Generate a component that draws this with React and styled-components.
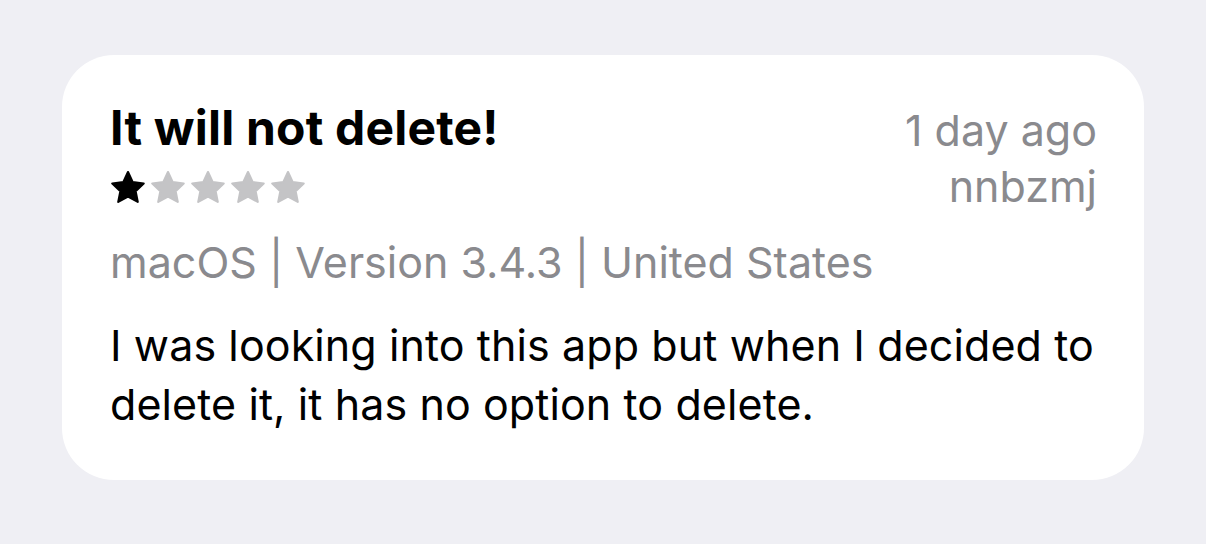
import React from 'react';
import styled, { createGlobalStyle } from 'styled-components';

const Global = createGlobalStyle`
  html, body { margin: 0; padding: 0; background: #efeff4; }
  body { font-family: Inter, "Noto Sans", sans-serif; -webkit-font-smoothing: antialiased; }
`;

const Page = styled.div`
  width: 1206px;
  height: 544px;
  box-sizing: border-box;
  padding: 55px 62px 64px 62px;
`;

const Card = styled.div`
  background: #ffffff;
  border-radius: 52px;
  height: 425px;
  box-sizing: border-box;
  padding: 44px 47px 0 48px;
`;

const Header = styled.div`
  display: flex;
  justify-content: space-between;
  align-items: flex-start;
`;

const Title = styled.h1`
  margin: 0;
  font-size: 48px;
  line-height: 58px;
  font-weight: 700;
  color: #000;
  letter-spacing: 0.2px;
`;

const Stars = styled.div`
  display: flex;
  gap: 6px;
  margin-top: 14px;
  padding-left: 1px;
`;

const Meta = styled.div`
  display: flex;
  flex-direction: column;
  align-items: flex-end;
  font-size: 43px;
  line-height: 56px;
  color: #8a8a8e;
  padding-top: 3px;
`;

const Platform = styled.div`
  font-size: 43px;
  line-height: 56px;
  color: #8a8a8e;
  margin-top: 20px;
`;

const Body = styled.p`
  margin: 26px 0 0;
  font-size: 43px;
  line-height: 59px;
  color: #000;
  letter-spacing: 0.1px;
`;

const Star = ({ filled }) => (
  <svg width="34" height="32" viewBox="1 0.5 22 21">
    <path
      d="M12 1.2l3.1 6.6 7.2.9-5.3 5 1.4 7.1L12 17.3l-6.4 3.5 1.4-7.1-5.3-5 7.2-.9z"
      fill={filled ? '#000' : '#c4c4c6'}
      stroke={filled ? '#000' : '#c4c4c6'}
      strokeWidth="1.4"
      strokeLinejoin="round"
    />
  </svg>
);

export default function App() {
  return (
    <>
      <Global />
      <Page>
        <Card>
          <Header>
            <div>
              <Title>It will not delete!</Title>
              <Stars>
                {[1, 2, 3, 4, 5].map((n) => (
                  <Star key={n} filled={n <= 1} />
                ))}
              </Stars>
            </div>
            <Meta>
              <span>1 day ago</span>
              <span>nnbzmj</span>
            </Meta>
          </Header>
          <Platform>macOS | Version 3.4.3 | United States</Platform>
          <Body>
            I was looking into this app but when I decided to delete it, it has no option to delete.
          </Body>
        </Card>
      </Page>
    </>
  );
}
